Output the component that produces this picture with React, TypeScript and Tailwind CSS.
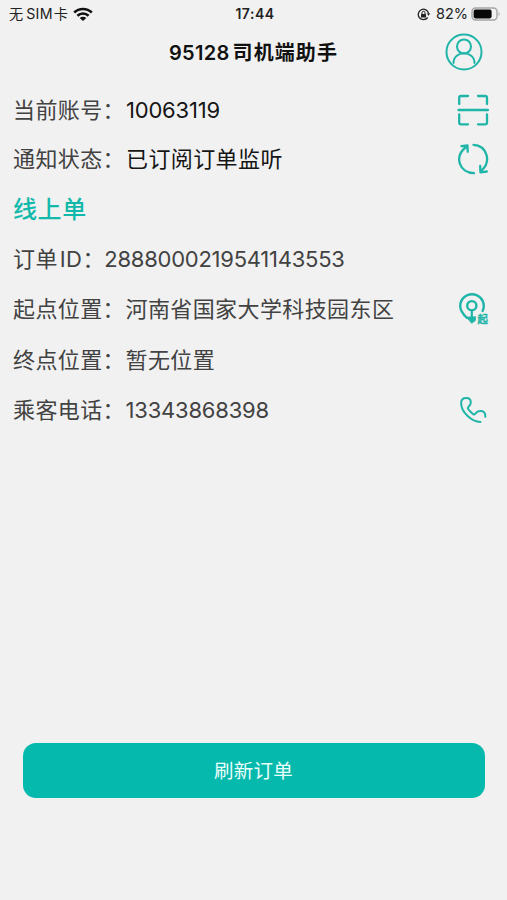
import type { ReactNode } from 'react';

const teal = '#1fb5a8';

function Row({ label, value, icon, dark, height }: { label: ReactNode; value: ReactNode; icon?: ReactNode; dark?: boolean; height: string }) {
  return (
    <div className={`flex items-center justify-between pl-[13px] pr-[18px] ${height}`}>
      <div className="flex items-center whitespace-nowrap text-[22px] leading-none tracking-[0.4px] text-[#424242]">
        <span>{label}</span>
        <span className={dark ? 'ml-px text-[#151515]' : 'ml-[0.5px]'}>{value}</span>
      </div>
      {icon}
    </div>
  );
}

function ScanIcon() {
  return (
    <svg width="32" height="32" viewBox="0 0 32 32" fill="none" stroke={teal} strokeWidth="2.3" strokeLinecap="round" strokeLinejoin="round">
      <path d="M2.2 10V3.8Q2.2 2 4 2H11M21 2h7.2Q30 2 30 3.8V10M2.2 20.500v8Q2.200 30.300 4 30.300H11M21 30.300h7.200Q30 30.300 30 28.500v-8M1.500 16h29.500" />
    </svg>
  );
}

function SyncIcon() {
  return (
    <svg width="32" height="32" viewBox="0 0 32 32" fill="none" stroke={teal} strokeWidth="2.3" strokeLinecap="round" strokeLinejoin="round">
      <path d="M16.500 1.800C29.500 2.500 35 18 24.500 27.500M17 30.200C2.500 29.500-3.500 14 9 4M4.500 3.200l6-.7.2 6.300M23.200 22.800l.2 6.500 6.400-.8" />
    </svg>
  );
}

function StartPinIcon() {
  return (
    <svg width="31" height="34" viewBox="0 0 31 34" fill="none" stroke={teal} strokeWidth="2.400">
      <path d="M9 26C4 21.300 2.200 18 2.200 14A11.800 11.800 0 0 1 25.800 14c0 2-.4 3.300-1.200 5" strokeLinecap="round" />
      <circle cx="13.800" cy="13.700" r="4.600" />
      <path d="M13.800 18.500v8" strokeWidth="2.200" />
      <path d="M8 24.500c2 .8 3.500.8 5.800.3 2.300.5 2.500.1 3.500-.3v4L13.700 31.200z" fill={teal} strokeWidth="1" />
      <text x="19.500" y="30.800" fill={teal} stroke={teal} strokeWidth="0.300" fontFamily="Noto Sans CJK SC, sans-serif" fontWeight="700" fontSize="10.500">起</text>
    </svg>
  );
}

function PhoneIcon() {
  return (
    <svg className="mr-0.5" width="28" height="28" viewBox="0 0 28 28" fill="none" stroke={teal} strokeWidth="2" strokeLinecap="round" strokeLinejoin="round">
      <path d="M21.500 26C12.500 26 2 16 2.100 6.700 2.200 3.500 4.200 1.900 7.200 1.900c3 0 4.600 1.500 4.600 4.300 0 2.300-.6 3.200-2.200 4.600-1.200 1.100-.9 1.900.8 3.700l2.700 2.700c1.800 1.700 2.500 1.600 3.500.2 1.300-2 3.300-2.800 5.800-2.300 2.900.6 4.200 2.700 3.900 5.700" />
    </svg>
  );
}

export default function App() {
  return (
    <div className="flex h-[900px] w-[507px] flex-col bg-[#f1f1f1] font-[Inter,'Noto_Sans_CJK_SC',sans-serif]">
      <header>
        <div className="grid h-7 grid-cols-3 items-center pl-[9px] pr-[6px] text-[#222]">
          <div className="flex items-center whitespace-nowrap text-[14.200px] leading-none">
            <span>无</span><span className="ml-[3px] tracking-[0.300px]">SIM</span><span className="ml-[1px]">卡</span>
            <svg className="ml-[5px]" width="20" height="15" viewBox="0 0 20 15" fill="none" stroke="#111" strokeWidth="2.600">
              <path d="M1.200 5.500c5-4.700 12.600-4.700 17.600 0M4.400 8.800c3.200-3 8-3 11.200 0" />
              <path d="M10 14 6.700 11.100c1.900-1.700 4.700-1.700 6.600 0z" fill="#111" stroke="none" />
            </svg>
          </div>
          <span className="text-center text-[14px] font-semibold leading-none tracking-[0.500px]">17:44</span>
          <div className="flex items-center justify-end">
            <svg className="mr-[6px]" width="13" height="13" viewBox="0 0 13 13" fill="none" stroke="#222" strokeWidth="1.300">
              <path d="M10.700 9.500A5.200 5.200 0 1 1 11.600 5.500" />
              <path d="m9.700 5.500 1.900 2.300 1.500-2.500z" fill="#222" stroke="none" />
              <rect x="4" y="6" width="5" height="3.600" rx=".5" fill="#222" stroke="none" />
              <path d="M5 6V4.800a1.500 1.500 0 0 1 3 0V6" strokeWidth="1" />
            </svg>
            <span className="mr-[3px] text-[14.500px] leading-none">82%</span>
            <svg width="30" height="14" viewBox="0 0 30 14" fill="none">
              <rect x="1" y="1" width="25" height="12" rx="3.500" stroke="#a5a5a5" strokeWidth="1.400" />
              <rect x="2.600" y="2.600" width="18" height="8.800" rx="1.800" fill="#080808" />
              <path d="M27.600 4.800q2 2.200 0 4.400z" fill="#a5a5a5" />
            </svg>
          </div>
        </div>
        <div className="grid h-[57px] grid-cols-[1fr_auto_1fr] items-start">
          <span />
          <h1 className="mt-[15px] flex whitespace-nowrap text-[20px] font-semibold leading-[20px] text-[#111]">
            <span className="tracking-[0.300px]">95128</span><span className="ml-[3px] tracking-[1.100px]">司机端助手</span>
          </h1>
          <svg className="mr-6 mt-[5px] justify-self-end" width="38" height="38" viewBox="0 0 38 38" fill="none" stroke={teal} strokeWidth="2">
            <circle cx="19" cy="19" r="17.500" />
            <circle cx="19" cy="13.500" r="7" />
            <path d="M8.500 30c0-13 21-13 21 0" strokeLinecap="round" />
          </svg>
        </div>
      </header>
      <main>
        <Row height="h-[49px]" label="当前账号：" value={<span className="tracking-[-0.200px]">10063119</span>} dark icon={<ScanIcon />} />
        <Row height="h-[49px]" label="通知状态：" value="已订阅订单监听" dark icon={<SyncIcon />} />
        <h2 className="flex h-[51px] items-center pl-[13px] pt-[2px] text-[24px] font-medium leading-none tracking-[0.600px] text-[#12b9ab]">线上单</h2>
        <Row height="h-[50px]" label={<><span>订单</span><span className="ml-[2px]">ID</span><span>：</span></>} value={<span className="-ml-px tracking-[-0.250px]">2888000219541143553</span>} />
        <Row height="h-[50px]" label="起点位置：" value="河南省国家大学科技园东区" icon={<StartPinIcon />} />
        <Row height="h-[51px]" label="终点位置：" value="暂无位置" />
        <Row height="h-[50px]" label="乘客电话：" value={<span className="tracking-[-0.200px]">13343868398</span>} icon={<PhoneIcon />} />
      </main>
      <button className="mx-auto mt-auto mb-[102px] h-[55px] w-[462px] rounded-[13px] bg-[#05b9ad] pt-[3px] text-[19.500px] leading-none tracking-[0.300px] text-[#eafffb]">刷新订单</button>
    </div>
  );
}
